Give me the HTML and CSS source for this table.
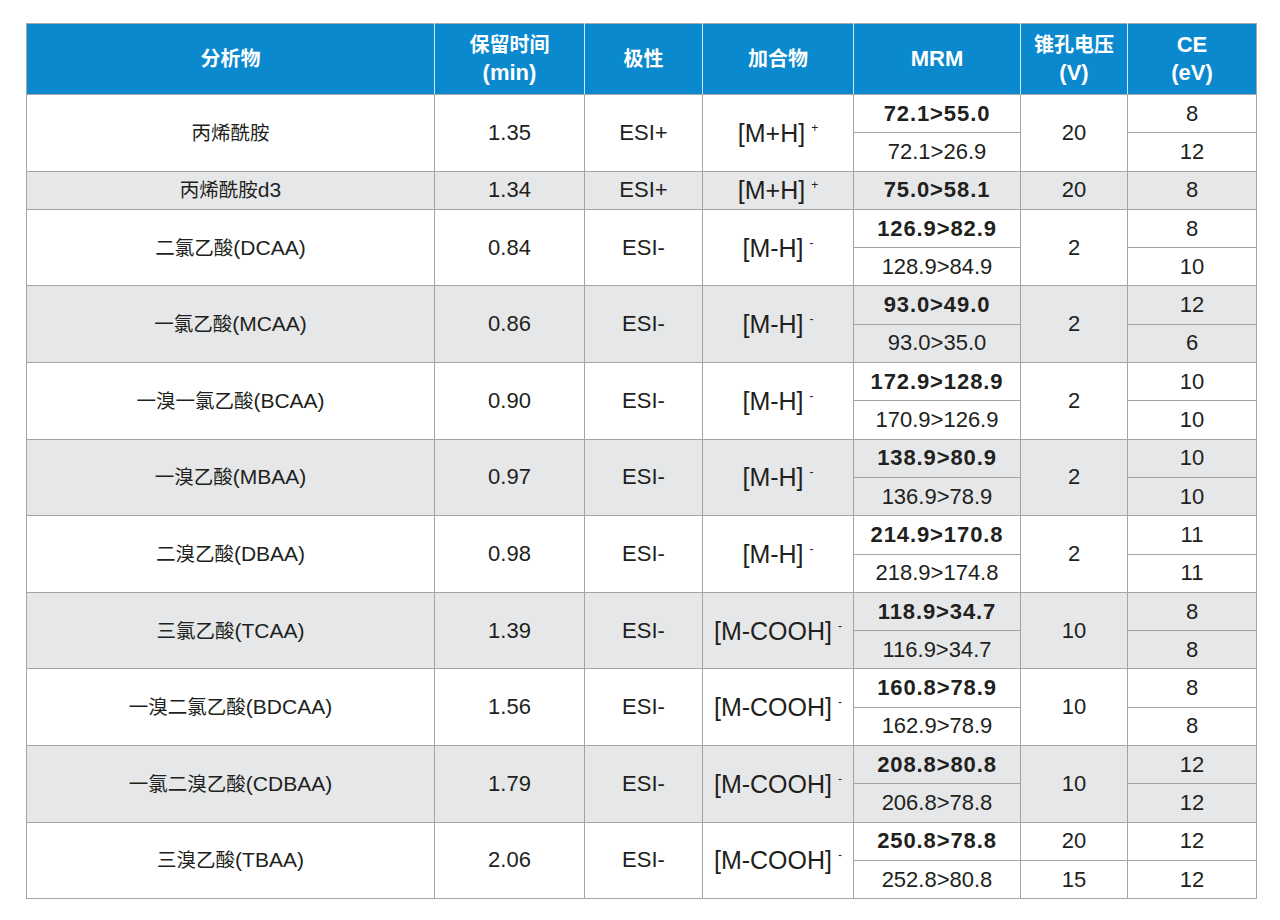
FILE: index.html
```html
<!DOCTYPE html>
<html lang="zh">
<head>
<meta charset="utf-8">
<title>MRM 参数</title>
<link rel="stylesheet" href="styles.css">
</head>
<body>
<table class="mrm">
  <colgroup>
    <col class="c1"><col class="c2"><col class="c3"><col class="c4"><col class="c5"><col class="c6"><col class="c7">
  </colgroup>
  <thead>
    <tr class="head">
      <th><span class="zh">分析物</span></th>
      <th><span class="zh">保留时间</span><br>(min)</th>
      <th><span class="zh">极性</span></th>
      <th><span class="zh">加合物</span></th>
      <th>MRM</th>
      <th><span class="zh">锥孔电压</span><br>(V)</th>
      <th>CE<br>(eV)</th>
    </tr>
  </thead>
  <tbody>
    <tr>
      <td rowspan="2" class="name"><span class="zh">丙烯酰胺</span></td><td rowspan="2">1.35</td><td rowspan="2">ESI+</td>
      <td rowspan="2" class="add">[M+H]<sup>+</sup></td>
      <td class="b">72.1&gt;55.0</td><td rowspan="2">20</td><td>8</td>
    </tr>
    <tr><td>72.1&gt;26.9</td><td>12</td></tr>

    <tr class="g">
      <td class="name"><span class="zh">丙烯酰胺</span>d3</td><td>1.34</td><td>ESI+</td>
      <td class="add">[M+H]<sup>+</sup></td>
      <td class="b">75.0&gt;58.1</td><td>20</td><td>8</td>
    </tr>

    <tr>
      <td rowspan="2" class="name"><span class="zh">二氯乙酸</span>(DCAA)</td><td rowspan="2">0.84</td><td rowspan="2">ESI-</td>
      <td rowspan="2" class="add">[M-H]<sup>-</sup></td>
      <td class="b">126.9&gt;82.9</td><td rowspan="2">2</td><td>8</td>
    </tr>
    <tr><td>128.9&gt;84.9</td><td>10</td></tr>

    <tr class="g">
      <td rowspan="2" class="name"><span class="zh">一氯乙酸</span>(MCAA)</td><td rowspan="2">0.86</td><td rowspan="2">ESI-</td>
      <td rowspan="2" class="add">[M-H]<sup>-</sup></td>
      <td class="b">93.0&gt;49.0</td><td rowspan="2">2</td><td>12</td>
    </tr>
    <tr class="g"><td>93.0&gt;35.0</td><td>6</td></tr>

    <tr>
      <td rowspan="2" class="name"><span class="zh">一溴一氯乙酸</span>(BCAA)</td><td rowspan="2">0.90</td><td rowspan="2">ESI-</td>
      <td rowspan="2" class="add">[M-H]<sup>-</sup></td>
      <td class="b">172.9&gt;128.9</td><td rowspan="2">2</td><td>10</td>
    </tr>
    <tr><td>170.9&gt;126.9</td><td>10</td></tr>

    <tr class="g">
      <td rowspan="2" class="name"><span class="zh">一溴乙酸</span>(MBAA)</td><td rowspan="2">0.97</td><td rowspan="2">ESI-</td>
      <td rowspan="2" class="add">[M-H]<sup>-</sup></td>
      <td class="b">138.9&gt;80.9</td><td rowspan="2">2</td><td>10</td>
    </tr>
    <tr class="g"><td>136.9&gt;78.9</td><td>10</td></tr>

    <tr>
      <td rowspan="2" class="name"><span class="zh">二溴乙酸</span>(DBAA)</td><td rowspan="2">0.98</td><td rowspan="2">ESI-</td>
      <td rowspan="2" class="add">[M-H]<sup>-</sup></td>
      <td class="b">214.9&gt;170.8</td><td rowspan="2">2</td><td>11</td>
    </tr>
    <tr><td>218.9&gt;174.8</td><td>11</td></tr>

    <tr class="g">
      <td rowspan="2" class="name"><span class="zh">三氯乙酸</span>(TCAA)</td><td rowspan="2">1.39</td><td rowspan="2">ESI-</td>
      <td rowspan="2" class="add">[M-COOH]<sup>-</sup></td>
      <td class="b">118.9&gt;34.7</td><td rowspan="2">10</td><td>8</td>
    </tr>
    <tr class="g"><td>116.9&gt;34.7</td><td>8</td></tr>

    <tr>
      <td rowspan="2" class="name"><span class="zh">一溴二氯乙酸</span>(BDCAA)</td><td rowspan="2">1.56</td><td rowspan="2">ESI-</td>
      <td rowspan="2" class="add">[M-COOH]<sup>-</sup></td>
      <td class="b">160.8&gt;78.9</td><td rowspan="2">10</td><td>8</td>
    </tr>
    <tr><td>162.9&gt;78.9</td><td>8</td></tr>

    <tr class="g">
      <td rowspan="2" class="name"><span class="zh">一氯二溴乙酸</span>(CDBAA)</td><td rowspan="2">1.79</td><td rowspan="2">ESI-</td>
      <td rowspan="2" class="add">[M-COOH]<sup>-</sup></td>
      <td class="b">208.8&gt;80.8</td><td rowspan="2">10</td><td>12</td>
    </tr>
    <tr class="g"><td>206.8&gt;78.8</td><td>12</td></tr>

    <tr>
      <td rowspan="2" class="name"><span class="zh">三溴乙酸</span>(TBAA)</td><td rowspan="2">2.06</td><td rowspan="2">ESI-</td>
      <td rowspan="2" class="add">[M-COOH]<sup>-</sup></td>
      <td class="b">250.8&gt;78.8</td><td>20</td><td>12</td>
    </tr>
    <tr><td>252.8&gt;80.8</td><td>15</td><td>12</td></tr>
  </tbody>
</table>
</body>
</html>
```

FILE: styles.css
```css
html, body {
  margin: 0;
  padding: 0;
  background: #ffffff;
}

body {
  padding: 23px 0 0 26px;
  font-family: "Liberation Sans", "Noto Sans CJK SC", sans-serif;
  color: #221f20;
}

.mrm {
  border-collapse: collapse;
  table-layout: fixed;
  width: 1230px;
}

.c1 { width: 408px; }
.c2 { width: 150px; }
.c3 { width: 118px; }
.c4 { width: 151px; }
.c5 { width: 167px; }
.c6 { width: 107px; }
.c7 { width: 129px; }

.mrm th {
  background: #0a89ce;
  color: #ffffff;
  font-weight: bold;
  font-size: 22px;
  line-height: 28px;
  height: 70px;
  padding: 0;
  text-align: center;
  vertical-align: middle;
  border: 1px solid #a9a9a9;
  border-left-color: #d4e6f3;
  border-right-color: #d4e6f3;
}

.mrm th .zh {
  font-size: 20px;
}

.mrm th:first-child { border-left-color: #a9a9a9; }
.mrm th:last-child { border-right-color: #a9a9a9; }

.mrm td {
  height: 37.3px;
  padding: 0;
  text-align: center;
  vertical-align: middle;
  border: 1px solid #a4a4a4;
  line-height: 26px;
  font-size: 22px;
}

.mrm td.name {
  font-size: 21px;
}

.mrm td.name .zh {
  font-size: 19.5px;
}

.mrm tr.g td {
  background: #e6e7e9;
}

.mrm td.b {
  font-weight: bold;
  letter-spacing: 0.9px;
}

.mrm td.add {
  font-size: 25px;
}

.mrm td.add sup {
  font-size: 12px;
  vertical-align: 10px;
  line-height: 0;
  margin-left: 6px;
}
```
